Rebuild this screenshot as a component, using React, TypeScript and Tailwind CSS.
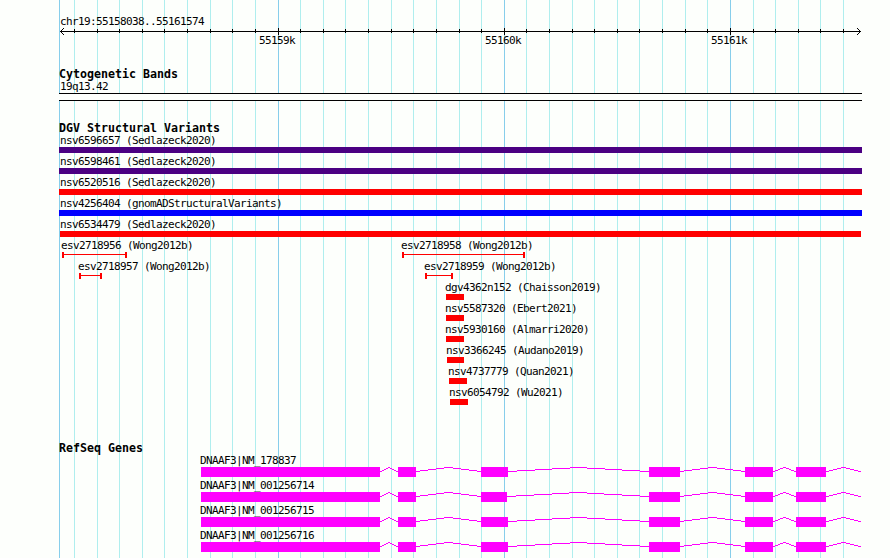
import {memo} from 'react';

const MINOR_LINES = [
  74, 97, 119, 142, 164, 187, 210, 232, 255, 300, 323, 345, 368, 391, 413, 436, 459, 481, 526, 549, 572, 594, 617, 639,
  662, 685, 707, 753, 775, 798, 820, 843,
];
const MAJOR_LINES = [278, 504, 730];

interface Variant {
  name: string;
  start: number;
  end: number;
  color?: string;
  span?: boolean;
}

// Each row is one level of the packed track, in pixels from the left edge
const variantRows: Variant[][] = [
  [{name: 'nsv6596657 (Sedlazeck2020)', start: 59, end: 862, color: 'bg-[#4b0082]'}],
  [{name: 'nsv6598461 (Sedlazeck2020)', start: 59, end: 862, color: 'bg-[#4b0082]'}],
  [{name: 'nsv6520516 (Sedlazeck2020)', start: 59, end: 862}],
  [{name: 'nsv4256404 (gnomADStructuralVariants)', start: 59, end: 862, color: 'bg-[#0000ff]'}],
  [{name: 'nsv6534479 (Sedlazeck2020)', start: 60, end: 861}],
  [
    {name: 'esv2718956 (Wong2012b)', start: 62, end: 127, span: true},
    {name: 'esv2718958 (Wong2012b)', start: 402, end: 525, span: true},
  ],
  [
    {name: 'esv2718957 (Wong2012b)', start: 79, end: 102, span: true},
    {name: 'esv2718959 (Wong2012b)', start: 425, end: 453, span: true},
  ],
  [{name: 'dgv4362n152 (Chaisson2019)', start: 446, end: 464}],
  [{name: 'nsv5587320 (Ebert2021)', start: 446, end: 464}],
  [{name: 'nsv5930160 (Almarri2020)', start: 446, end: 464}],
  [{name: 'nsv3366245 (Audano2019)', start: 447, end: 464}],
  [{name: 'nsv4737779 (Quan2021)', start: 449, end: 467}],
  [{name: 'nsv6054792 (Wu2021)', start: 450, end: 468}],
];

const genes = [
  {name: 'DNAAF3|NM_178837', thirdExonEnd: 508},
  {name: 'DNAAF3|NM_001256714', thirdExonEnd: 507},
  {name: 'DNAAF3|NM_001256715', thirdExonEnd: 508},
  {name: 'DNAAF3|NM_001256716', thirdExonEnd: 508},
];

// Introns are drawn as stepped hats, one pixel tall per step
const intronPath = (start: number, end: number) => {
  const mid = (start + end - 1) / 2;
  const half = mid - start;
  let d = '';
  for (let x = start; x < end; x++) {
    const rise = Math.round(4 * (1 - Math.abs(x - mid) / half));
    d += `M${x} ${4.5 - rise}h1`;
  }
  return d;
};

const Grid = memo(() => (
  <svg className="absolute inset-0 -z-10" height="558" shapeRendering="crispEdges" width="890">
    {MINOR_LINES.map(x => (
      <rect fill="#afeeee" height="558" key={x} width="1" x={x} y="0" />
    ))}
    {[59, ...MAJOR_LINES].map(x => (
      <rect fill="#87ceeb" height="558" key={x} width="1" x={x} y="0" />
    ))}
  </svg>
));

const Ruler = memo(() => (
  <svg className="block" height="8" shapeRendering="crispEdges" width="890">
    <rect height="1" width="801" x="60" y="3" />
    <path d="M61 2h1v1h-1zM62 1h1v1h-1zM63 0h1v1h-1zM61 4h1v1h-1zM62 5h1v1h-1zM63 6h1v1h-1z" />
    <path d="M859 2h1v1h-1zM858 1h1v1h-1zM857 0h1v1h-1zM859 4h1v1h-1zM858 5h1v1h-1zM857 6h1v1h-1z" />
    {MINOR_LINES.map(x => (
      <rect height="4" key={x} width="1" x={x} y="1" />
    ))}
    {MAJOR_LINES.map(x => (
      <rect height="7" key={x} width="1" x={x} y="0" />
    ))}
  </svg>
));

const TrackTitle: React.FC<{title: string}> = ({title}) => (
  <h2 className="h-3 pl-[59px] text-[11.63px] leading-3 font-bold tracking-normal">{title}</h2>
);

const VariantRow: React.FC<{items: Variant[]}> = ({items}) => (
  <div className="grid h-[21px]">
    {items.map(({name, start, end, color = 'bg-[#ff0000]', span}) => (
      <div className="col-start-1 row-start-1" key={name} style={{marginLeft: start}}>
        <div className={`h-[13px] pt-px leading-3 ${start < 60 ? 'pl-px' : start > 60 ? '-ml-px' : ''}`}>{name}</div>
        {span ? (
          <div className="flex h-1.5 items-start border-x-2 border-[#ff0000] pt-0.5" style={{width: end - start}}>
            <div className="h-px w-full bg-[#ff0000]" />
          </div>
        ) : (
          <div className={`h-1.5 ${color}`} style={{width: end - start}} />
        )}
      </div>
    ))}
  </div>
);

const Gene: React.FC<{name: string; thirdExonEnd: number}> = ({name, thirdExonEnd}) => {
  const exons = [
    [201, 380],
    [398, 416],
    [481, thirdExonEnd],
    [649, 680],
    [745, 773],
    [796, 826],
  ];
  return (
    <div className="h-[25px]">
      <div className="h-[13px] pt-px pl-[200px] leading-3">{name}</div>
      <svg className="block" height="10" shapeRendering="crispEdges" width="890">
        {exons.map(([start, end], i) => (
          <g key={start}>
            <rect fill="#ff00ff" height="10" width={end - start} x={start} y="0" />
            <path d={intronPath(end, exons[i + 1]?.[0] ?? 861)} stroke="#ff00ff" />
          </g>
        ))}
      </svg>
    </div>
  );
};

export default function App() {
  return (
    <main className="relative isolate h-[558px] w-[890px] overflow-hidden bg-[#fdfffc] font-['DejaVu_Sans_Mono',monospace] text-[11px] tracking-[-0.62px] whitespace-pre text-black">
      <Grid />
      <div className="pt-[15px]">
        <div className="h-[13px] pt-px pl-[60px] leading-3">chr19:55158038..55161574</div>
        <Ruler />
        <div className="-mt-px flex h-[11px] gap-[190px] pl-[259px] leading-3">
          <span className="w-9">55159k</span>
          <span className="w-9">55160k</span>
          <span className="w-9">55161k</span>
        </div>
      </div>

      <section className="pt-[22px]">
        <TrackTitle title="Cytogenetic Bands" />
        <div className="h-[13px] pt-px pl-[60px] leading-3">19q13.42</div>
        <div className="ml-[59px] h-2 w-[803px] border-y border-black bg-[#fdfffc]" />
      </section>

      <section className="pt-[21px]">
        <TrackTitle title="DGV Structural Variants" />
        {variantRows.map(items => (
          <VariantRow items={items} key={items[0].name} />
        ))}
      </section>

      <section className="pt-[35px]">
        <TrackTitle title="RefSeq Genes" />
        {genes.map(gene => (
          <Gene key={gene.name} {...gene} />
        ))}
      </section>
    </main>
  );
}
